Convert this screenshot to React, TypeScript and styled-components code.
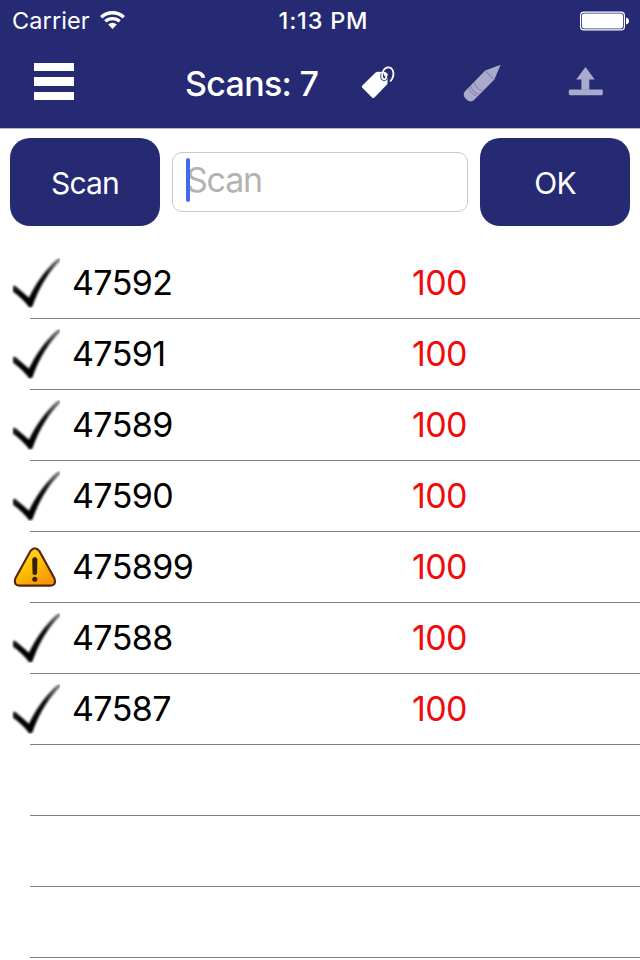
import React from "react";
import styled, { createGlobalStyle } from "styled-components";

const NAVY = "#252a73";

const GlobalStyle = createGlobalStyle`
  * { box-sizing: border-box; }
  body { margin: 0; background: #fff; font-family: Inter, Roboto, sans-serif; }
`;

const Screen = styled.main`
  width: 640px;
  height: 960px;
  overflow: hidden;
  background: #fff;
`;

const Header = styled.header`
  height: 129px;
  background: ${NAVY};
  border-bottom: 1px solid #b9b9bd;
  color: #fff;
`;

const StatusBar = styled.div`
  display: grid;
  grid-template-columns: 1fr auto 1fr;
  align-items: center;
  height: 40px;
  padding: 0 10px 0 12px;
  font-size: 24px;
  line-height: 40px;
`;

const CarrierGroup = styled.div`
  display: flex;
  align-items: center;
  gap: 10px;
`;

const Carrier = styled.span`
  padding-top: 1px;
  font-size: 23.5px;
  letter-spacing: 0.1px;
`;

const Clock = styled.span`
  padding: 1px 0 0 5px;
  font-size: 23.5px;
  font-weight: 500;
  letter-spacing: 0.8px;
`;

const BatteryGroup = styled.div`
  display: flex;
  justify-content: flex-end;
`;

const NavBar = styled.nav`
  display: grid;
  grid-template-columns: 185px 175px 103px 105px 72px;
  align-items: center;
  height: 88px;
`;

const MenuButton = styled.button`
  display: flex;
  flex-direction: column;
  gap: 6px;
  width: 39.5px;
  margin: -5px 0 0 34.3px;
  padding: 0;
  border: 0;
  background: none;
`;

const MenuBar = styled.span`
  height: 8.4px;
  background: #fff;
`;

const Title = styled.h1`
  margin: 0;
  font-size: 34px;
  font-weight: 500;
  line-height: 88px;
  letter-spacing: -0.7px;
  white-space: nowrap;
`;

const ToolIcon = styled.svg`
  display: block;
  overflow: visible;
`;

const EntryBar = styled.section`
  display: grid;
  grid-template-columns: 150px 296px 150px;
  gap: 12px;
  align-items: center;
  height: 119px;
  padding: 9px 10px 22px;
`;

const ActionButton = styled.button`
  height: 88px;
  padding: 1px 0 0;
  border: 0;
  border-radius: 20px;
  background: ${NAVY};
  color: #fff;
  font-family: inherit;
  font-size: 30px;
  font-weight: 400;
  letter-spacing: -0.8px;
`;

const Field = styled.div`
  display: flex;
  align-items: center;
  height: 60px;
  padding: 0 0 4px 13px;
  border: 1px solid #c8c8c8;
  border-radius: 10px;
`;

const Caret = styled.span`
  z-index: 1;
  width: 4px;
  height: 44px;
  margin-right: -4px;
  border-radius: 2px;
  background: #426be8;
`;

const Placeholder = styled.span`
  color: #b3b3b3;
  font-size: 34px;
  line-height: 44px;
  letter-spacing: -1.2px;
`;

const List = styled.ul`
  margin: 0;
  padding: 0;
  list-style: none;
`;

const Row = styled.li`
  display: grid;
  grid-template-columns: 72px 340px 1fr;
  height: 71px;
  background: linear-gradient(#7f7f7f, #7f7f7f) 30px 70px / 610px 1px no-repeat;
  font-size: 34px;
  line-height: 70px;
`;

const Code = styled.span`
  color: #000;
  letter-spacing: -0.6px;
`;

const Quantity = styled.span`
  color: #f00a0c;
  letter-spacing: -0.6px;
`;

const StateIcon = styled.svg`
  display: block;
  width: 48px;
  height: 50px;
  margin: 10px 0 0 12px;
`;

const Wifi = () => (
  <svg width="25" height="19" viewBox="0 0 25 19" fill="#fff">
    <path d="M0 5.1A18 18 0 0 1 25 5.1L22.6 7.5A14.6 14.6 0 0 0 2.4 7.5Z" />
    <path d="M4.2 9.3A12 12 0 0 1 20.8 9.3L18.5 11.6A8.8 8.8 0 0 0 6.5 11.6Z" />
    <path d="M8.2 13.5A6.2 6.2 0 0 1 16.8 13.5L12.5 18.1Z" />
  </svg>
);

const Battery = () => (
  <svg width="50" height="20" viewBox="0 0 50 20">
    <rect x="0.6" y="1.1" width="43.8" height="17.8" rx="3.2" fill="none" stroke="#fff" strokeWidth="1.2" />
    <rect x="2" y="2.6" width="41" height="14.8" rx="1.8" fill="#fff" />
    <path d="M46 6.5Q49 7.2 49 10T46 13.5Z" fill="#fff" />
  </svg>
);

const Tag = () => (
  <ToolIcon width="36" height="34" viewBox="0 0.5 36 34">
    <path d="M2.4 19.1 15.6 6.1Q16.6 5.2 18 5.2L25.5 5.4 27.7 7.5 27.5 17.4 14.5 31Q13.2 32 12 31L2.3 21.3Q1.2 20.2 2.4 19.1Z" fill="#fff" />
    <path d="M22.3 8.5C21.8 13.2 25.4 14 26 10.6" fill="none" stroke={NAVY} strokeWidth="3.8" strokeLinecap="round" />
    <path d="M30.6 14.4C35.2 9.2 34 .8 28 .8C24 .8 22.1 6 22.1 9.6C22.1 13.6 25.9 14 26.1 10.6V8" fill="none" stroke="#fff" strokeWidth="1.8" strokeLinecap="round" />
  </ToolIcon>
);

const Pencil = () => (
  <ToolIcon width="38" height="38" viewBox="0 1 38 38">
    <path d="M37.6.7 22.2 6.6 2 27.2Q-1 31 2.9 35T10.8 36.3L31.4 15.6Z" fill="#aaaacc" />
    <path d="M23.3 7Q23.2 9.8 25.7 10Q25.8 12.2 28.1 12.4Q28.7 14.7 31 14.8M11.4 18.8Q13 24.7 19.1 26.6M7.8 22.2Q9.3 28.2 15.6 30.2M5.9 24.1Q7.5 30.1 13.6 32" fill="none" stroke="#74769f" strokeWidth="0.8" />
  </ToolIcon>
);

const Upload = () => (
  <ToolIcon width="35" height="29" viewBox="0 3 35 29" fill="#aaaacc">
    <path d="M17.5 0 26.7 12.5H21.3V22.7H13.4V12.5H8.2Z" />
    <rect x="0.8" y="22.6" width="34" height="5.6" rx="1.4" />
  </ToolIcon>
);

const Check = () => (
  <StateIcon viewBox="0 0 48 50">
    <defs>
      <linearGradient id="ink" gradientUnits="userSpaceOnUse" x1="20" y1="38" x2="48" y2="0">
        <stop offset="0" stopColor="#000" />
        <stop offset="0.5" stopColor="#0c0c0c" />
        <stop offset="0.8" stopColor="#555" />
        <stop offset="1" stopColor="#888" />
      </linearGradient>
      <linearGradient id="tip" x1="0" y1="0" x2="1" y2="1">
        <stop offset="0" stopColor="#222" />
        <stop offset="0.35" stopColor="#000" />
        <stop offset="1" stopColor="#000" />
      </linearGradient>
      <filter id="soft" x="-10%" y="-10%" width="120%" height="120%" colorInterpolationFilters="sRGB">
        <feGaussianBlur stdDeviation="0.9" />
      </filter>
    </defs>
    <g filter="url(#soft)">
      <path d="M17.3 39C23.5 25.5 34.7 10 45 1.2L48.5 0V2.8C38.5 11.5 27.7 28 20.6 47.8L17.6 49.4Z" fill="url(#ink)" />
      <path d="M1 28 3.2 27.8 17 39.8 20.7 39.6 20.4 48.6 17.4 49.5Q9.6 39.6 1 33.8Z" fill="url(#tip)" />
    </g>
  </StateIcon>
);

const Warning = () => (
  <StateIcon viewBox="0 0 48 50">
    <defs>
      <linearGradient id="amber" x1="0" y1="0" x2="0.6" y2="1">
        <stop offset="0" stopColor="#ffdb3c" />
        <stop offset="0.5" stopColor="#ffc400" />
        <stop offset="1" stopColor="#f6960a" />
      </linearGradient>
    </defs>
    <path d="M18.3 9.2Q22.8 3.2 27.4 9.2L42.5 36.5Q44.7 43.6 38.3 43.6H7.6Q1.2 43.6 3.3 36.5Z" fill="url(#amber)" stroke="#572310" strokeWidth="2.1" />
    <path d="M20.2 17.5Q20.4 15 22.8 15T25.4 17.5L25 32Q22.8 34.2 20.6 32Z" fill="#302309" />
    <circle cx="22.8" cy="37.3" r="2.5" fill="#302309" />
  </StateIcon>
);

const scans = [
  { code: "47592", quantity: 100, valid: true },
  { code: "47591", quantity: 100, valid: true },
  { code: "47589", quantity: 100, valid: true },
  { code: "47590", quantity: 100, valid: true },
  { code: "475899", quantity: 100, valid: false },
  { code: "47588", quantity: 100, valid: true },
  { code: "47587", quantity: 100, valid: true },
];

const emptyRows = ["first", "second", "third"];

export default function App() {
  return (
    <>
      <GlobalStyle />
      <Screen>
        <Header>
          <StatusBar>
            <CarrierGroup>
              <Carrier>Carrier</Carrier>
              <Wifi />
            </CarrierGroup>
            <Clock>1:13 PM</Clock>
            <BatteryGroup>
              <Battery />
            </BatteryGroup>
          </StatusBar>
          <NavBar>
            <MenuButton aria-label="Menu">
              <MenuBar />
              <MenuBar />
              <MenuBar />
            </MenuButton>
            <Title>Scans: {scans.length}</Title>
            <Tag />
            <Pencil />
            <Upload />
          </NavBar>
        </Header>
        <EntryBar>
          <ActionButton>Scan</ActionButton>
          <Field>
            <Caret />
            <Placeholder>Scan</Placeholder>
          </Field>
          <ActionButton>OK</ActionButton>
        </EntryBar>
        <List>
          {scans.map((scan) => (
            <Row key={scan.code}>
              {scan.valid ? <Check /> : <Warning />}
              <Code>{scan.code}</Code>
              <Quantity>{scan.quantity}</Quantity>
            </Row>
          ))}
          {emptyRows.map((name) => (
            <Row key={name} />
          ))}
        </List>
      </Screen>
    </>
  );
}
